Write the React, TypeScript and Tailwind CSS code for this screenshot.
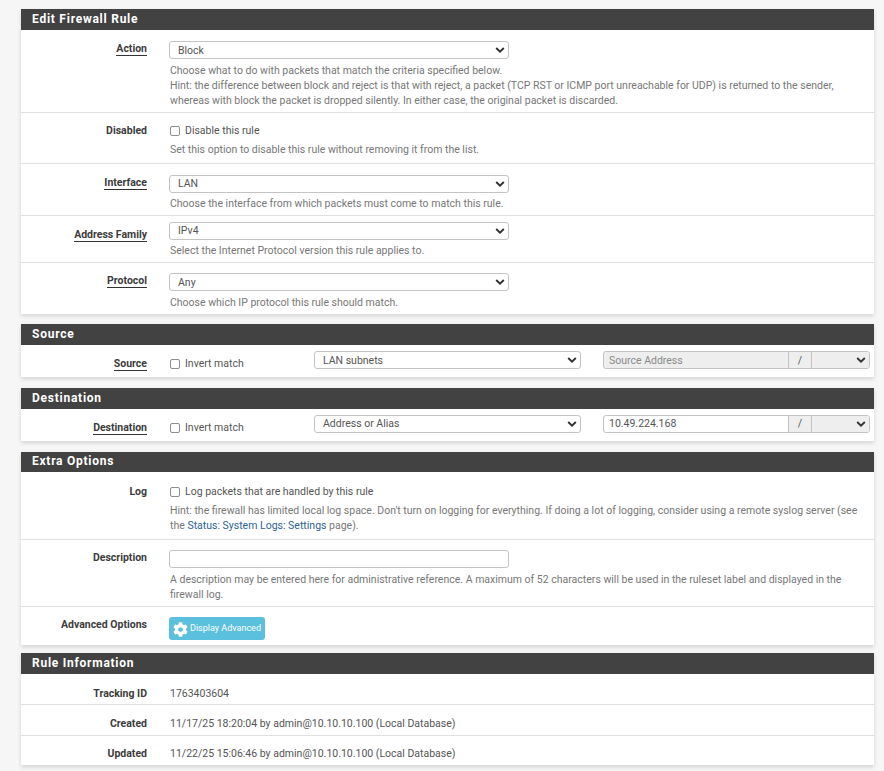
import React from "react";
import { FaCog } from "react-icons/fa";

function Chevron() {
  return (
    <svg width="10" height="7" viewBox="0 0 10 7" className="absolute right-[3px] top-1/2 -translate-y-1/2" fill="none">
      <path d="M1.2 1.5 5 5.2l3.8-3.7" stroke="#333" strokeWidth="1.9" />
    </svg>
  );
}

function Select({ value, width, low }: { value: string; width: string; low?: boolean }) {
  return (
    <div className={`relative h-[18px] rounded-[3px] border border-[#c4c4c4] bg-white pl-[8px] text-[10.5px] text-[#555] ${low ? "leading-[18px]" : "leading-[16px]"} ${width}`}>
      {value}
      <Chevron />
    </div>
  );
}

function Check({ label }: { label: string }) {
  return (
    <div className="flex items-center pl-[1px] text-[10.5px] leading-[15px] text-[#555]">
      <span className="mr-[5px] mt-[1px] h-[10px] w-[10px] rounded-[2px] border border-[#8f8f8f] bg-white" />
      {label}
    </div>
  );
}

function Label({ text, u, pt = "" }: { text: string; u?: boolean; pt?: string }) {
  return (
    <div className={`w-[126px] shrink-0 text-right text-[10.5px] font-bold leading-[15px] text-[#3c3c3c] ${pt}`}>
      <span className={u ? "border-b border-[#333]" : ""}>{text}</span>
    </div>
  );
}

function Row({ label, u, h, pt, labelPt, children, last }: { label: string; u?: boolean; h: string; pt: string; labelPt?: string; children: React.ReactNode; last?: boolean }) {
  return (
    <div className={`flex ${h} ${pt} ${last ? "" : "border-b border-[#e0e0e0]"}`}>
      <Label text={label} u={u} pt={labelPt} />
      <div className="ml-[22px] min-w-0 flex-1">{children}</div>
    </div>
  );
}

function Help({ children, mt = "mt-[4px]" }: { children: React.ReactNode; mt?: string }) {
  return <div className={`${mt} pl-[1px] pr-[6px] text-[10.5px] leading-[15px] text-[#777]`}>{children}</div>;
}

function Panel({ title, mt, head = "h-[21px] leading-[20px]", children }: { title: string; mt?: string; head?: string; children: React.ReactNode }) {
  return (
    <div className={`bg-white shadow-[0_2px_4px_rgba(0,0,0,0.14)] ${mt ?? ""}`}>
      <div className={`bg-[#424242] pl-[11px] text-[12px] font-bold tracking-[0.75px] text-white ${head}`}>{title}</div>
      {children}
    </div>
  );
}

function AddrRow({ label, sel, addr, disabled }: { label: string; sel: string; addr: string; disabled?: boolean }) {
  return (
    <div className="flex h-[32px] items-start">
      <div className="pt-[11px]"><Label text={label} u /></div>
      <div className="ml-[22px] w-[145px] shrink-0 pt-[11px]"><Check label="Invert match" /></div>
      <div className="pt-[6px]"><Select value={sel} width="w-[267px]" low={disabled} /></div>
      <div className={`ml-[22px] mt-[6px] flex h-[18px] w-[267px] overflow-hidden rounded-[3px] border border-[#c4c4c4] text-[10.5px] ${disabled ? "bg-[#eeeeee] leading-[18px] text-[#8a8a8a]" : "bg-white leading-[16px] text-[#555]"}`}>
        <div className="flex-1 pl-[5px]">{addr}</div>
        <div className="w-[24px] border-x border-[#c4c4c4] bg-[#eeeeee] text-center text-[#555]">/</div>
        <div className="relative w-[57px] bg-[#eeeeee]"><Chevron /></div>
      </div>
    </div>
  );
}

export default function App() {
  const value = "pl-[1px] text-[10.5px] leading-[15px] text-[#555]";
  return (
    <div className="h-[771px] overflow-hidden bg-[#f6f6f6] pl-[21px] pr-[10px] pt-[9px] font-['Roboto',sans-serif]">
      <Panel title="Edit Firewall Rule">
        <Row label="Action" u h="h-[83px]" pt="pt-[11px]">
          <Select value="Block" width="w-[340px]" low />
          <Help>
            Choose what to do with packets that match the criteria specified below.<br />
            Hint: the difference between block and reject is that with reject, a packet (TCP RST or ICMP port unreachable for UDP) is returned to the sender, whereas with block the packet is dropped silently. In either case, the original packet is discarded.
          </Help>
        </Row>
        <Row label="Disabled" h="h-[51px]" pt="pt-[10px]">
          <Check label="Disable this rule" />
          <Help>Set this option to disable this rule without removing it from the list.</Help>
        </Row>
        <Row label="Interface" u h="h-[52px]" pt="pt-[11px]">
          <Select value="LAN" width="w-[340px]" />
          <Help mt="mt-[3px]">Choose the interface from which packets must come to match this rule.</Help>
        </Row>
        <Row label="Address Family" u h="h-[47px]" pt="pt-[6px]" labelPt="pt-[5px]">
          <Select value="IPv4" width="w-[340px]" />
          <Help mt="mt-[3px]">Select the Internet Protocol version this rule applies to.</Help>
        </Row>
        <Row label="Protocol" u h="h-[51px]" pt="pt-[10px]" last>
          <Select value="Any" width="w-[340px]" low />
          <Help>Choose which IP protocol this rule should match.</Help>
        </Row>
      </Panel>

      <Panel title="Source" mt="mt-[10px]">
        <AddrRow label="Source" sel="LAN subnets" addr="Source Address" disabled />
      </Panel>

      <Panel title="Destination" mt="mt-[11px]">
        <AddrRow label="Destination" sel="Address or Alias" addr="10.49.224.168" />
      </Panel>

      <Panel title="Extra Options" mt="mt-[11px]" head="h-[20px] leading-[18px]">
        <Row label="Log" h="h-[68px]" pt="pt-[12px]">
          <Check label="Log packets that are handled by this rule" />
          <Help>
            Hint: the firewall has limited local log space. Don't turn on logging for everything. If doing a lot of logging, consider using a remote syslog server (see the <span className="text-[#2a6496]">Status: System Logs: Settings</span> page).
          </Help>
        </Row>
        <Row label="Description" h="h-[67px]" pt="pt-[10px]">
          <div className="h-[18px] w-[340px] rounded-[3px] border border-[#c4c4c4] bg-white" />
          <Help>A description may be entered here for administrative reference. A maximum of 52 characters will be used in the ruleset label and displayed in the firewall log.</Help>
        </Row>
        <Row label="Advanced Options" h="h-[38px]" pt="pt-[10px]" last>
          <div className="flex h-[23px] w-[96px] items-center whitespace-nowrap rounded-[3px] bg-[#5bc0de] pl-[4px] pt-[1px] text-[9px] text-white">
            <FaCog size={15} color="#fff" className="mr-[2px] shrink-0" />
            Display Advanced
          </div>
        </Row>
      </Panel>

      <Panel title="Rule Information" mt="mt-[8px]">
        <Row label="Tracking ID" h="h-[31px]" pt="pt-[12px]"><div className={value}>1763403604</div></Row>
        <Row label="Created" h="h-[31px]" pt="pt-[11px]"><div className={value}>11/17/25 18:20:04 by admin@10.10.10.100 (Local Database)</div></Row>
        <Row label="Updated" h="h-[29px]" pt="pt-[10px]" last><div className={value}>11/22/25 15:06:46 by admin@10.10.10.100 (Local Database)</div></Row>
      </Panel>
    </div>
  );
}
